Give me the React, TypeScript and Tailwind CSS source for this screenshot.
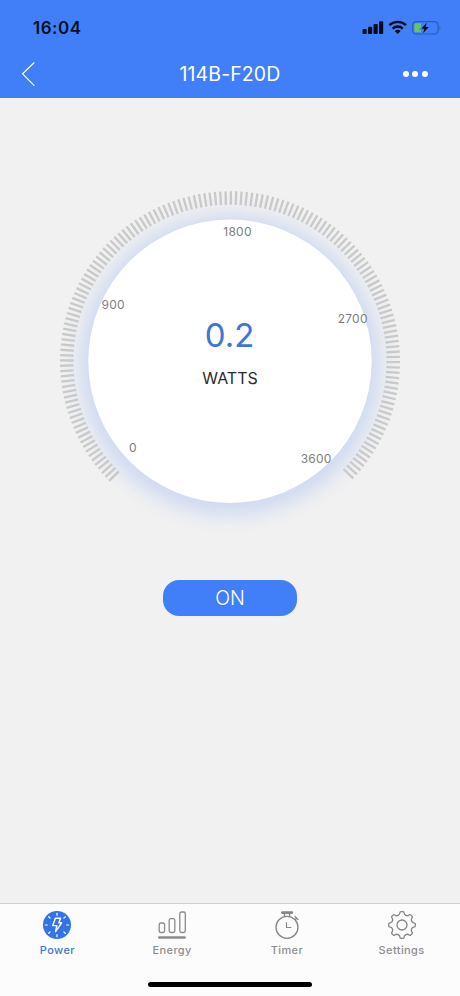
import React from 'react';

const TICK_COUNT = 150;
const TICK_STEP = 1.8;
const ticks = Array.from({ length: TICK_COUNT }, (_, i) => -134.7 + i * TICK_STEP);

const scaleLabels = [
  { text: '0', x: 133, y: 452 },
  { text: '900', x: 113.2, y: 309 },
  { text: '1800', x: 237.5, y: 236 },
  { text: '2700', x: 352.7, y: 323 },
  { text: '3600', x: 316.2, y: 463 },
];

function StatusBar() {
  return (
    <div className="flex h-[50px] items-center justify-between pt-[5px] pl-[33px] pr-[19px] text-[#0a1022]">
      <span className="pt-px text-[17px] font-semibold leading-none tracking-[0.5px]">16:04</span>
      <svg width="80" height="16" viewBox="0 0 80 16" fill="none">
        <g fill="#060b1c">
          <rect x="1.5" y="9" width="4.2" height="5" rx="1" />
          <rect x="7" y="6.7" width="4.2" height="7.3" rx="1" />
          <rect x="12.5" y="4" width="4.2" height="10" rx="1" />
          <rect x="18" y="1.2" width="4.2" height="12.8" rx="1" />
        </g>
        <g stroke="#060b1c" strokeWidth="2.4">
          <path d="M28.4 5.2a12 12 0 0 1 16.6 0" />
          <path d="M31.6 8.6a7.4 7.4 0 0 1 10.2 0" />
        </g>
        <path d="M33.7 11.1a4.4 4.4 0 0 1 6 0l-3 3z" fill="#060b1c" />
        <rect x="51.7" y="1.6" width="25.4" height="12.4" rx="3.6" stroke="#245cb8" strokeWidth="1.2" />
        <path d="M55 3.3h5v9h-5a1.6 1.6 0 0 1-1.6-1.6V4.9a1.6 1.6 0 0 1 1.6-1.6z" fill="#65c466" />
        <path d="M78.5 5.8v4c1.2-.5 1.2-3.5 0-4z" fill="#245cb8" />
        <path d="M65.8 2.6l-5.400 6.200h3l-1.300 4.400 5.600-6.300h-3.100z" fill="#060b1c" stroke="#417ff9" strokeWidth="2.4" paintOrder="stroke" />
      </svg>
    </div>
  );
}

function NavBar() {
  return (
    <div className="grid h-12 grid-cols-3 items-center text-white">
      <svg className="ml-[21px]" width="16" height="26" viewBox="0 0 16 26" fill="none" stroke="white" strokeWidth="1.2">
        <path d="M13.3 1.5L1.6 12.8l11.7 11.8" />
      </svg>
      <h1 className="pt-px text-center text-[19.5px] font-normal leading-none tracking-[0.1px] whitespace-nowrap">114B-F20D</h1>
      <div className="mr-[32px] flex justify-end gap-[3.5px]">
        <span className="size-[6px] rounded-full bg-white" />
        <span className="size-[6px] rounded-full bg-white" />
        <span className="size-[6px] rounded-full bg-white" />
      </div>
    </div>
  );
}

function Gauge() {
  return (
    <svg className="block" width="460" height="460" viewBox="0 98 460 460">
      <defs>
        <filter id="glow" x="-30%" y="-30%" width="160%" height="160%" colorInterpolationFilters="sRGB">
          <feGaussianBlur stdDeviation="8.5" />
        </filter>
      </defs>
      <circle cx="230" cy="364.5" r="151.500" fill="#d0dbf1" filter="url(#glow)" />
      <circle cx="230" cy="361.3" r="141.7" fill="white" />
      <g stroke="#c9c9c9" strokeWidth="2.3">
        {ticks.map((angle) => (
          <line key={angle} x1="230" y1="191.3" x2="230" y2="204.8" transform={`rotate(${angle} 230 361.3)`} />
        ))}
      </g>
      <g fill="#7e7e7e" fontSize="12" textAnchor="middle" letterSpacing="0.25">
        {scaleLabels.map((l) => (
          <text key={l.text} x={l.x} y={l.y}>{l.text}</text>
        ))}
      </g>
      <text x="229.5" y="346.5" fill="#3d75dc" fontSize="33" fontWeight="400" textAnchor="middle">0.2</text>
      <text x="230" y="384" fill="#2b2b2b" fontSize="16" textAnchor="middle">WATTS</text>
    </svg>
  );
}

function PowerIcon() {
  return (
    <svg width="28" height="28" viewBox="0 0 28 28" fill="none">
      <circle cx="14" cy="14" r="14" fill="#3273e6" />
      <g stroke="white" strokeWidth="1.2" strokeLinecap="round">
        {[0, 45, 90, 135, 180, 225, 270, 315].map((a) => (
          <path key={a} d="M14 2.3v2" transform={`rotate(${a} 14 14)`} />
        ))}
      </g>
      <path d="M12.4 7.2h5.2l-1.8 4.6h2.8l-6 8.8 1.2-6H9.7z" stroke="white" strokeWidth="1.4" strokeLinejoin="round" />
    </svg>
  );
}

function EnergyIcon() {
  return (
    <svg width="28" height="28" viewBox="0 0 28 28" fill="none" stroke="#8b8b8b" strokeWidth="1.3">
      <rect x="1.2" y="12" width="5.4" height="9.5" rx="1.7" />
      <rect x="11.2" y="7.7" width="5.6" height="13.8" rx="1.7" />
      <rect x="21.8" y="1" width="5.5" height="20.5" rx="1.7" />
      <path d="M1.2 26.4h25.4" strokeWidth="2.5" strokeLinecap="round" />
    </svg>
  );
}

function TimerIcon() {
  return (
    <svg width="28" height="28" viewBox="0 0 28 28" fill="none" stroke="#858585" strokeWidth="1.3">
      <circle cx="14" cy="16.3" r="11" />
      <path d="M9.3 1.6h9.6" strokeWidth="2.6" strokeLinecap="round" />
      <path d="M11.5 2.5v3.2M16.6 2.5v3.2" />
      <path d="M21.7 5.2l3.7 3.7M23.7 7.2L22 8.8" />
      <path d="M13.5 11.2v5.3h4.7" strokeWidth="1.1" />
    </svg>
  );
}

// Outline of an eight-toothed gear: each tooth is a rounded bump on the rim.
const GEAR_TOOTH = 'M10.1 4.400C11.300 3.900 11.700 3.500 11.800 2.300Q11.900 .7 13 .7h2Q16.100 .7 16.200 2.300C16.300 3.500 16.700 3.900 17.900 4.400';

function SettingsIcon() {
  return (
    <svg width="28" height="28" viewBox="0 0 28 28" fill="none" stroke="#858585" strokeWidth="1.3" strokeLinecap="round">
      {[0, 45, 90, 135, 180, 225, 270, 315].map((a) => (
        <path key={a} d={GEAR_TOOTH} transform={`rotate(${a} 14 14)`} />
      ))}
      <circle cx="14" cy="14" r="5" />
    </svg>
  );
}

const tabs = [
  { label: 'Power', Icon: PowerIcon, color: 'text-[#3f78cd]' },
  { label: 'Energy', Icon: EnergyIcon, color: 'text-[#8e8e8e]' },
  { label: 'Timer', Icon: TimerIcon, color: 'text-[#8e8e8e]' },
  { label: 'Settings', Icon: SettingsIcon, color: 'text-[#8e8e8e]' },
];

function TabBar() {
  return (
    <footer className="flex h-[93px] flex-col border-t border-[#cfcfcf] bg-[#fcfcfc]">
      <nav className="mr-[1px] grid grid-cols-4 pt-[7px]">
        {tabs.map(({ label, Icon, color }) => (
          <button key={label} className={`flex flex-col items-center gap-[4px] ${color}`}>
            <Icon />
            <span className="text-[11px] font-medium leading-[14px] tracking-[0.4px]">{label}</span>
          </button>
        ))}
      </nav>
      <div className="mx-auto mt-auto mb-[9px] h-[5.5px] w-[164px] rounded-full bg-black" />
    </footer>
  );
}

export default function App() {
  return (
    <div className="flex h-[996px] w-[460px] flex-col overflow-hidden bg-[#f1f1f1] font-['Inter','Liberation_Sans',sans-serif]">
      <header className="bg-[#417ff9]">
        <StatusBar />
        <NavBar />
      </header>
      <main className="flex flex-1 flex-col items-center">
        <Gauge />
        <button className="mt-[22px] flex h-9 w-[134px] items-center justify-center rounded-[16px] bg-[#417ff9] pt-[2px] text-[19.5px] font-[350] leading-none text-white">
          ON
        </button>
      </main>
      <TabBar />
    </div>
  );
}
